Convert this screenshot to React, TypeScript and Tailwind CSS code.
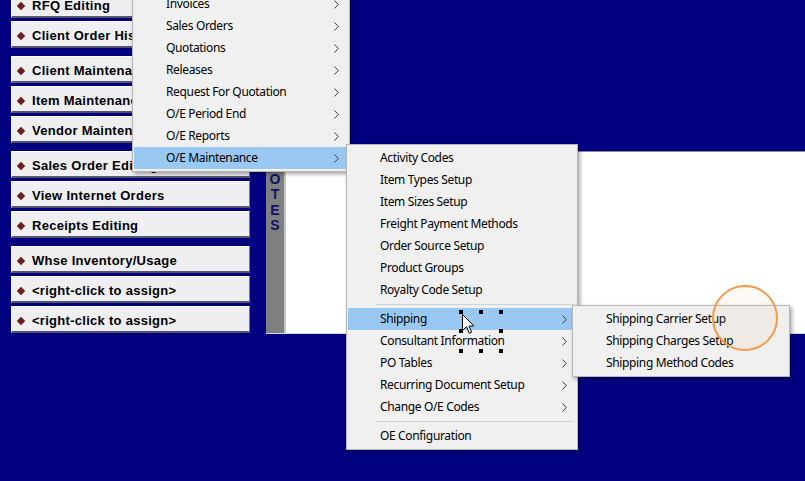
import React from "react";

type MenuEntry = { label: string; sub?: boolean; active?: boolean } | "sep";

const buttonGroups: string[][] = [
  ["RFQ Editing", "Client Order History"],
  ["Client Maintenance", "Item Maintenance", "Vendor Maintenance"],
  ["Sales Order Editing", "View Internet Orders", "Receipts Editing"],
  ["Whse Inventory/Usage", "<right-click to assign>", "<right-click to assign>"],
];

const orderEntryMenu: MenuEntry[] = [
  { label: "Invoices", sub: true },
  { label: "Sales Orders", sub: true },
  { label: "Quotations", sub: true },
  { label: "Releases", sub: true },
  { label: "Request For Quotation", sub: true },
  { label: "O/E Period End", sub: true },
  { label: "O/E Reports", sub: true },
  { label: "O/E Maintenance", sub: true, active: true },
];

const maintenanceMenu: MenuEntry[] = [
  { label: "Activity Codes" },
  { label: "Item Types Setup" },
  { label: "Item Sizes Setup" },
  { label: "Freight Payment Methods" },
  { label: "Order Source Setup" },
  { label: "Product Groups" },
  { label: "Royalty Code Setup" },
  "sep",
  { label: "Shipping", sub: true, active: true },
  { label: "Consultant Information", sub: true },
  { label: "PO Tables", sub: true },
  { label: "Recurring Document Setup", sub: true },
  { label: "Change O/E Codes", sub: true },
  "sep",
  { label: "OE Configuration" },
];

const shippingMenu: MenuEntry[] = [
  { label: "Shipping Carrier Setup" },
  { label: "Shipping Charges Setup" },
  { label: "Shipping Method Codes" },
];

function Chevron() {
  return (
    <svg width="5" height="9" viewBox="0 0 5 9" className="shrink-0">
      <path d="M0.5 0.5 L4.3 4.5 L0.5 8.5" fill="none" stroke="#3c3c3c" strokeWidth="1" />
    </svg>
  );
}

function Menu({ items, className }: { items: MenuEntry[]; className: string }) {
  return (
    <div
      className={`absolute bg-[#f0f0f0] border border-[#b5b5b5] pl-[1px] pr-[3px] py-[2px] shadow-[2px_2px_4px_rgba(0,0,0,0.35)] text-[12px] tracking-[-0.35px] text-black ${className}`}
    >
      {items.map((it, i) =>
        it === "sep" ? (
          <div key={i} className="h-[7px] flex items-center pl-[28px]">
            <div className="h-px w-full bg-[#d2d2d2]" />
          </div>
        ) : (
          <div
            key={i}
            className={`h-[22px] flex items-center pl-[32px] pr-[7px] ${it.active ? "bg-[#99c9f3]" : ""}`}
          >
            <span className="flex-1 whitespace-nowrap leading-none">{it.label}</span>
            {it.sub && <Chevron />}
          </div>
        )
      )}
    </div>
  );
}

function ShortcutButton({ label }: { label: string }) {
  return (
    <div className="h-[27px] pt-[3px] flex items-center bg-[#efeff2] border-t border-l border-t-white border-l-white border-r border-r-[#7a7a86] border-b-2 border-b-[#55556a]">
      <span className="ml-[6px] w-[6px] h-[6px] rotate-45 bg-[#6e1c1c] shrink-0" />
      <span className="ml-[8px] whitespace-nowrap font-bold text-[13px] tracking-[0.28px] text-black">
        {label}
      </span>
    </div>
  );
}

export default function App() {
  return (
    <div
      className="relative w-[805px] h-[481px] overflow-hidden bg-[#000080]"
      style={{ fontFamily: "'Liberation Sans', Arial, sans-serif" }}
    >
      <div className="flex items-start">
        {/* shortcut button column */}
        <div className="ml-[11px] -mt-[9px] w-[239px] flex flex-col gap-[8px]">
          {buttonGroups.map((group, gi) => (
            <div key={gi} className="flex flex-col gap-[3px]">
              {group.map((label, bi) => (
                <ShortcutButton key={bi} label={label} />
              ))}
            </div>
          ))}
        </div>

        {/* notes panel */}
        <div className="ml-[16px] mt-[151px] w-[539px] h-[183px] flex border-t border-t-[#8a8a9c] border-b border-b-[#d8d8e0]">
          <div className="w-[18px] bg-[#808080] flex flex-col items-center pt-[4px] text-[14px] font-bold leading-[15.5px] text-[#10106a]">
            {"NOTES".split("").map((c, i) => (
              <span key={i}>{c}</span>
            ))}
          </div>
          <div className="w-[2px] bg-[#c4c4c4]" />
          <div className="flex-1 bg-white" />
        </div>
      </div>

      {/* cascading menus */}
      <div style={{ fontFamily: "'Noto Sans', 'Open Sans', sans-serif" }}>
        <Menu items={orderEntryMenu} className="left-[132px] top-[-10px] w-[218px]" />
        <Menu items={maintenanceMenu} className="left-[346px] top-[144px] w-[232px]" />
        <Menu items={shippingMenu} className="left-[572px] top-[305px] w-[218px]" />
      </div>

      {/* selection handles around the pointer */}
      {[
        [459, 310],
        [479, 310],
        [499, 310],
        [459, 329],
        [499, 329],
        [459, 349],
        [479, 349],
        [499, 349],
      ].map(([x, y], i) => (
        <div
          key={i}
          className="absolute w-[4px] h-[4px] bg-black"
          style={{ left: x, top: y }}
        />
      ))}

      {/* mouse pointer */}
      <svg className="absolute left-[462px] top-[314px]" width="13" height="21" viewBox="0 0 13 21">
        <path
          d="M0.5 0.5 L0.5 16.5 L4.5 12.8 L7.2 19.2 L9.6 18.2 L7 12 L12 12 Z"
          fill="white"
          stroke="black"
          strokeWidth="1"
          strokeLinejoin="miter"
        />
      </svg>

      {/* highlight ring */}
      <div className="absolute left-[712px] top-[285px] w-[66px] h-[66px] rounded-full border-[2.5px] border-[#f29a48] bg-[rgba(242,154,72,0.06)]" />
    </div>
  );
}
